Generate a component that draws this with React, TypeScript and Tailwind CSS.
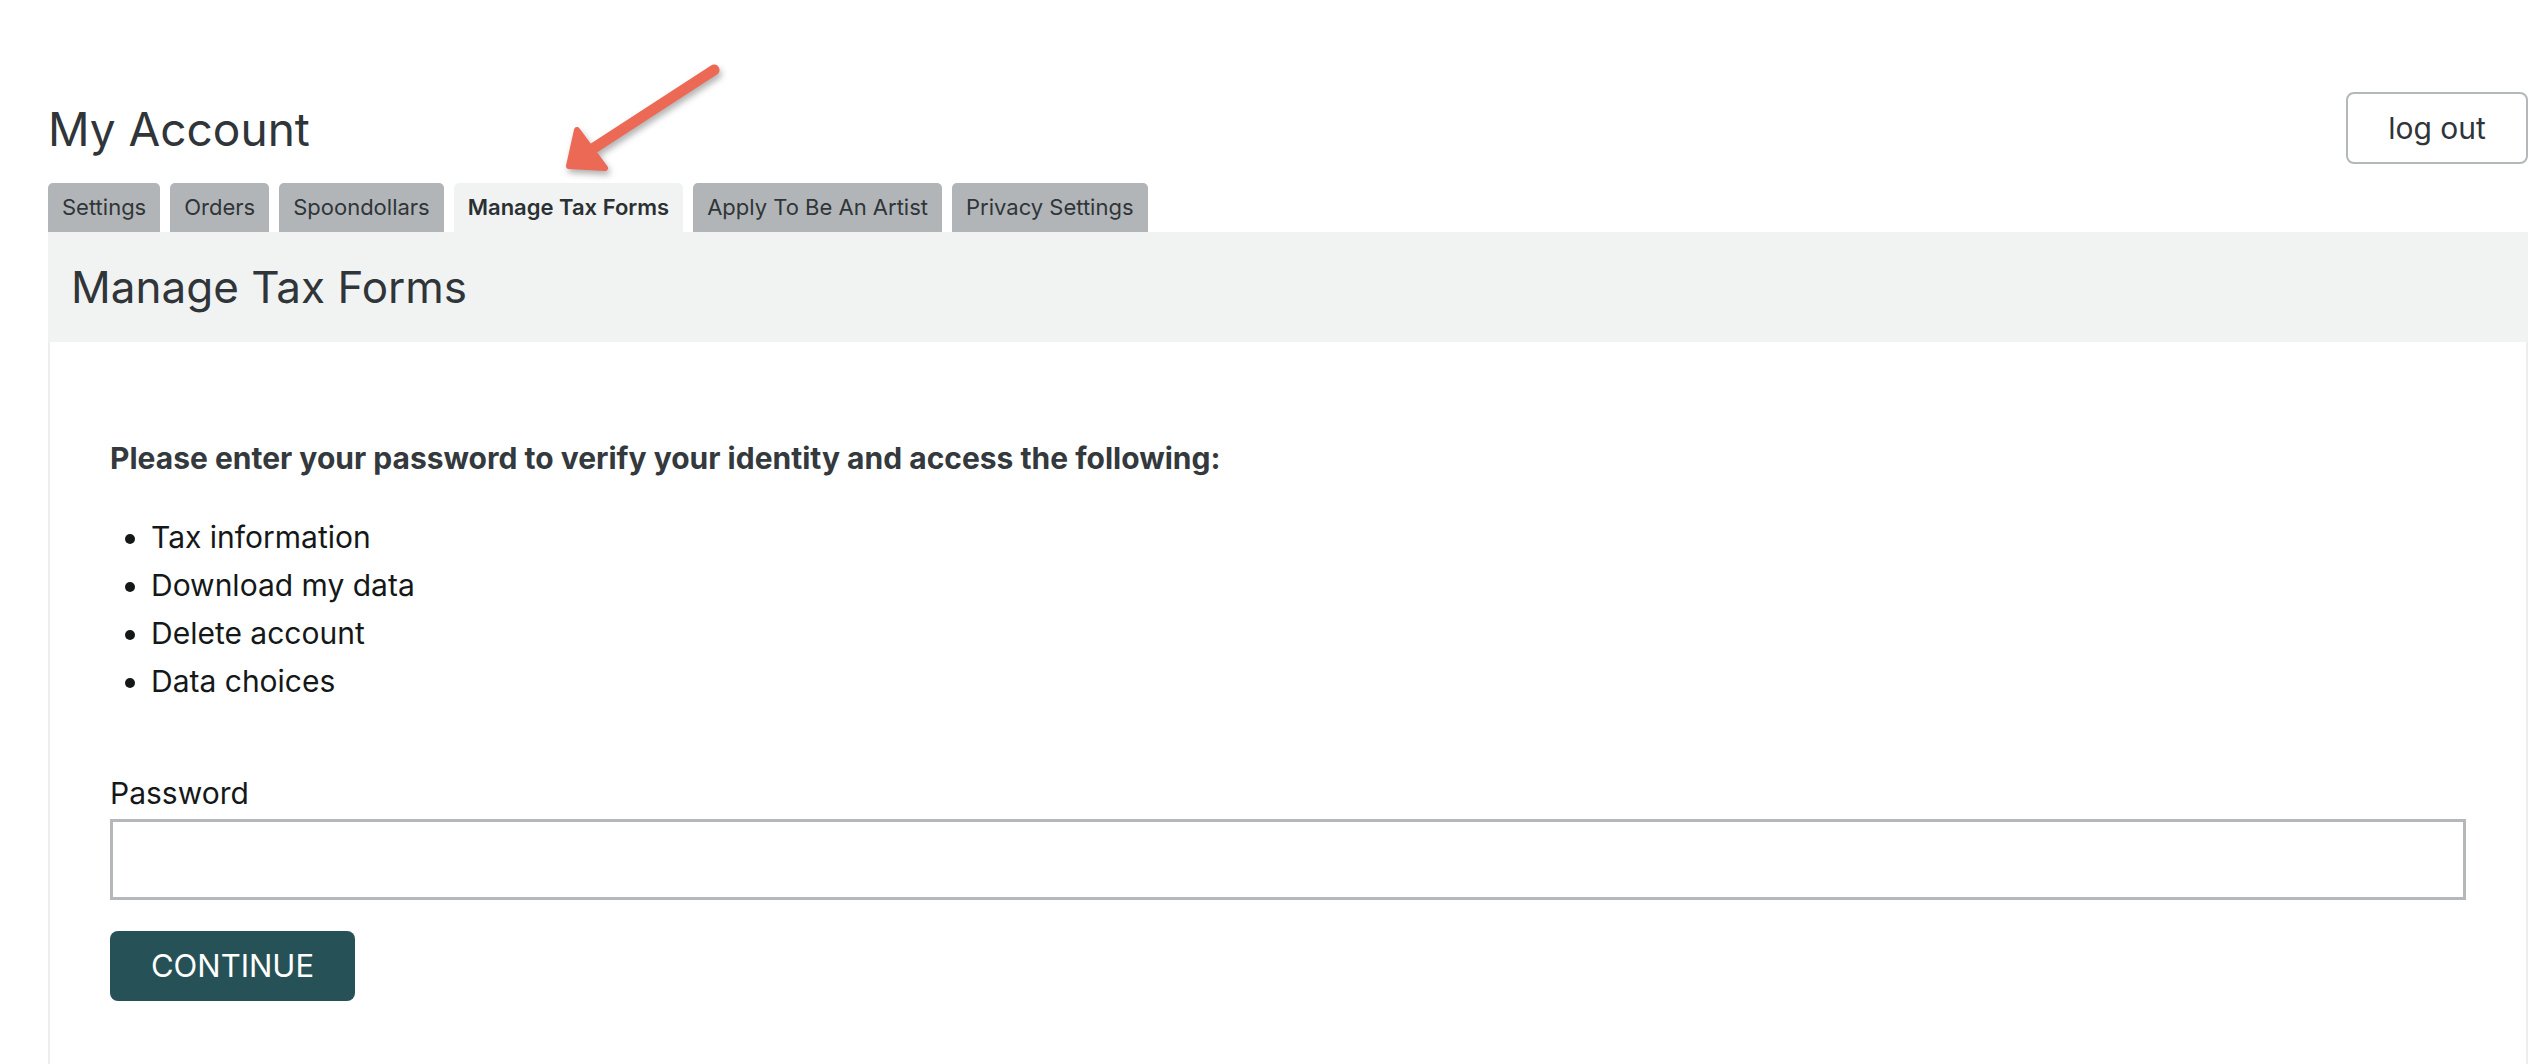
import React from 'react';

const tabs = ['Settings', 'Orders', 'Spoondollars', 'Manage Tax Forms', 'Apply To Be An Artist', 'Privacy Settings'];
const items = ['Tax information', 'Download my data', 'Delete account', 'Data choices'];

export default function App() {
  return (
    <div className="relative min-h-screen bg-white pl-[48px] pr-[16px] pt-[92px] text-[#2f3538] font-['Inter',sans-serif]">
      {/* Annotation arrow */}
      <svg
        className="absolute left-[540px] top-[40px] drop-shadow-[2px_4px_3px_rgba(0,0,0,0.3)]"
        width="200"
        height="160"
        viewBox="540 40 200 160"
      >
        <line x1="714" y1="70" x2="580" y2="157" stroke="#ec6a55" strokeWidth="11" strokeLinecap="round" />
        <polygon points="569,166 577,130 605,168" fill="#ec6a55" stroke="#ec6a55" strokeWidth="6" strokeLinejoin="round" />
      </svg>

      {/* Title row */}
      <div className="flex items-center justify-between mb-[19px]">
        <h1 className="text-[46px] leading-none font-normal pt-[2px]">My Account</h1>
        <button className="h-[72px] w-[182px] rounded-[8px] border-2 border-[#b4b8bb] bg-white text-[30px] text-[#2f3538]">
          log out
        </button>
      </div>

      {/* Tabs */}
      <div className="flex gap-[10px]">
        {tabs.map((t) => {
          const active = t === 'Manage Tax Forms';
          return (
            <div
              key={t}
              className={
                active
                  ? 'h-[49px] px-[14px] rounded-t-[5px] flex items-center text-[22px] font-semibold bg-[#f1f3f2] text-[#2b3133]'
                  : 'h-[49px] px-[14px] rounded-t-[5px] flex items-center text-[22px] bg-[#b2b5b8] text-[#2f3538]'
              }
            >
              {t}
            </div>
          );
        })}
      </div>

      {/* Panel */}
      <div className="flex flex-col">
        <div className="h-[110px] bg-[#f1f3f2] flex items-center pl-[23px]">
          <h2 className="text-[44px] leading-none font-normal">Manage Tax Forms</h2>
        </div>
        <div className="border-x-2 border-[#eeeeee] px-[60px] pt-[98px] pb-[80px]">
          <p className="text-[30px] leading-[36px] font-bold text-[#33393c]">
            Please enter your password to verify your identity and access the following:
          </p>
          <ul className="list-disc pl-[41px] mt-[37px] text-[30px] leading-[48px] text-[#151819]">
            {items.map((i) => (
              <li key={i}>{i}</li>
            ))}
          </ul>
          <label className="block mt-[68px] text-[30px] leading-[40px] text-[#151819]">Password</label>
          <input type="password" className="mt-[6px] block w-full h-[81px] border-[3px] border-[#b4b8bb] bg-white" />
          <button className="mt-[31px] h-[70px] w-[245px] rounded-[8px] bg-[#265257] text-white text-[31px]">
            CONTINUE
          </button>
        </div>
      </div>
    </div>
  );
}
